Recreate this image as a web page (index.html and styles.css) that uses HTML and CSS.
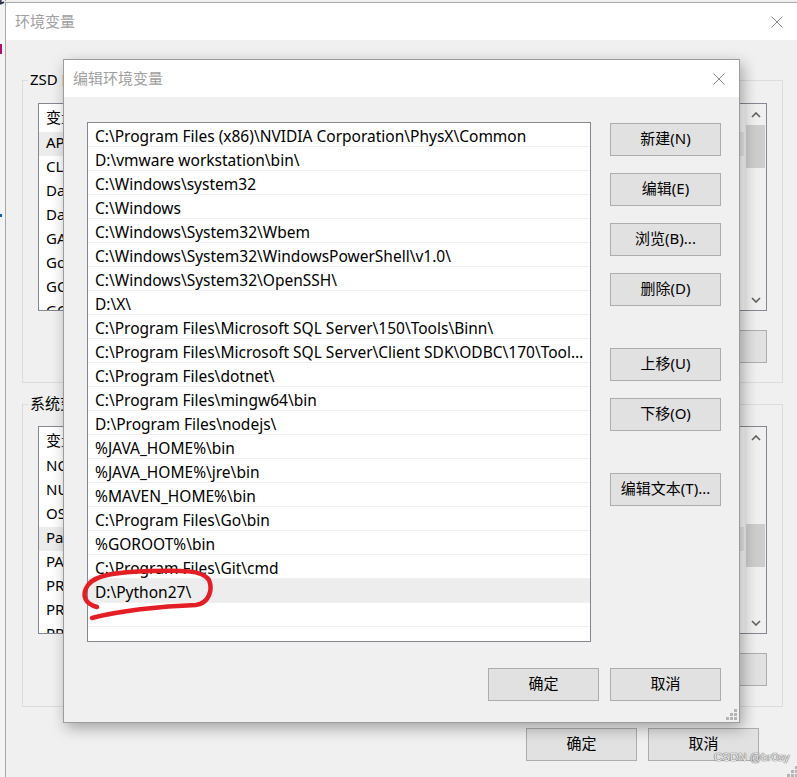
FILE: index.html
```html
<!DOCTYPE html>
<html lang="zh-CN">
<head>
    <meta charset="UTF-8">
    <title>编辑环境变量</title>
    <link rel="stylesheet" href="styles.css">
</head>
<body>
<div class="screen">
    <div class="behind">
        <span class="behind-title">环境变量</span>
        <span class="mark mark-pink"></span>
        <span class="mark mark-blue"></span>
    </div>

    <!-- back window: 环境变量 -->
    <div class="win back">
        <div class="titlebar">
            <span class="title">环境变量</span>
            <span class="close">
                <svg width="12" height="12" viewBox="0 0 12 12"><path d="M0.5 0.5L11.5 11.5M11.5 0.5L0.5 11.5" stroke="#8a8a8a" stroke-width="1"/></svg>
            </span>
        </div>
        <div class="back-body">
            <fieldset class="group">
                <legend>ZSD 的用户变量(U)</legend>
                <div class="varlist">
                    <div class="vl-rows">
                        <div class="vl-head">变量</div>
                        <div class="vl-row sel">APPDATA</div>
                        <div class="vl-row">CLASSPATH</div>
                        <div class="vl-row">DataGrip</div>
                        <div class="vl-row">DataSpell</div>
                        <div class="vl-row">GATEWAY</div>
                        <div class="vl-row">GoLand</div>
                        <div class="vl-row">GOPATH</div>
                        <div class="vl-row">GOPROXY</div>
                    </div>
                    <div class="vscroll">
                        <span class="arrow"><svg width="10" height="6" viewBox="0 0 10 6"><path d="M1 5L5 1L9 5" fill="none" stroke="#606060" stroke-width="1.6"/></svg></span>
                        <div class="track"><div class="thumb" style="margin-top: 0px"></div></div>
                        <span class="arrow"><svg width="10" height="6" viewBox="0 0 10 6"><path d="M1 1L5 5L9 1" fill="none" stroke="#606060" stroke-width="1.6"/></svg></span>
                    </div>
                </div>
                <div class="group-btns">
                    <button class="btn">新建(N)...</button>
                    <button class="btn">编辑(E)...</button>
                    <button class="btn">删除(D)</button>
                </div>
            </fieldset>

            <fieldset class="group group-sys">
                <legend>系统变量(S)</legend>
                <div class="varlist">
                    <div class="vl-rows">
                        <div class="vl-head">变量</div>
                        <div class="vl-row">NODE_PATH</div>
                        <div class="vl-row">NUMBER_OF_PROCESSORS</div>
                        <div class="vl-row">OS</div>
                        <div class="vl-row sel">Path</div>
                        <div class="vl-row">PATHEXT</div>
                        <div class="vl-row">PROCESSOR_ARCHITECTURE</div>
                        <div class="vl-row">PROCESSOR_IDENTIFIER</div>
                        <div class="vl-row">PROCESSOR_LEVEL</div>
                    </div>
                    <div class="vscroll">
                        <span class="arrow"><svg width="10" height="6" viewBox="0 0 10 6"><path d="M1 5L5 1L9 5" fill="none" stroke="#606060" stroke-width="1.6"/></svg></span>
                        <div class="track"><div class="thumb" style="margin-top: 76px"></div></div>
                        <span class="arrow"><svg width="10" height="6" viewBox="0 0 10 6"><path d="M1 1L5 5L9 1" fill="none" stroke="#606060" stroke-width="1.6"/></svg></span>
                    </div>
                </div>
                <div class="group-btns">
                    <button class="btn">新建(W)...</button>
                    <button class="btn">编辑(I)...</button>
                    <button class="btn">删除(L)</button>
                </div>
            </fieldset>

            <div class="back-foot">
                <button class="btn">确定</button>
                <button class="btn">取消</button>
            </div>
        </div>
        <span class="grip grip-back"></span>
    </div>

    <!-- front window: 编辑环境变量 -->
    <div class="win front">
        <div class="titlebar">
            <span class="title">编辑环境变量</span>
            <span class="close close-front">
                <svg width="12" height="12" viewBox="0 0 12 12"><path d="M0.5 0.5L11.5 11.5M11.5 0.5L0.5 11.5" stroke="#8a8a8a" stroke-width="1"/></svg>
            </span>
        </div>
        <div class="front-body">
            <div class="front-main">
                <div class="pathlist">
                    <div class="path">C:\Program Files (x86)\NVIDIA Corporation\PhysX\Common</div>
                    <div class="path">D:\vmware workstation\bin\</div>
                    <div class="path">C:\Windows\system32</div>
                    <div class="path">C:\Windows</div>
                    <div class="path">C:\Windows\System32\Wbem</div>
                    <div class="path">C:\Windows\System32\WindowsPowerShell\v1.0\</div>
                    <div class="path">C:\Windows\System32\OpenSSH\</div>
                    <div class="path">D:\X\</div>
                    <div class="path">C:\Program Files\Microsoft SQL Server\150\Tools\Binn\</div>
                    <div class="path">C:\Program Files\Microsoft SQL Server\Client SDK\ODBC\170\Tools\Binn\</div>
                    <div class="path">C:\Program Files\dotnet\</div>
                    <div class="path">C:\Program Files\mingw64\bin</div>
                    <div class="path">D:\Program Files\nodejs\</div>
                    <div class="path">%JAVA_HOME%\bin</div>
                    <div class="path">%JAVA_HOME%\jre\bin</div>
                    <div class="path">%MAVEN_HOME%\bin</div>
                    <div class="path">C:\Program Files\Go\bin</div>
                    <div class="path">%GOROOT%\bin</div>
                    <div class="path">C:\Program Files\Git\cmd</div>
                    <div class="path sel">D:\Python27\</div>
                    <div class="path"></div>
                </div>
                <div class="btn-col">
                    <button class="btn">新建(N)</button>
                    <button class="btn">编辑(E)</button>
                    <button class="btn">浏览(B)...</button>
                    <button class="btn">删除(D)</button>
                    <button class="btn gap-lg">上移(U)</button>
                    <button class="btn">下移(O)</button>
                    <button class="btn gap-lg">编辑文本(T)...</button>
                </div>
            </div>
            <div class="front-foot">
                <button class="btn">确定</button>
                <button class="btn">取消</button>
            </div>
        </div>
        <span class="grip grip-front"></span>
    </div>

    <!-- hand drawn red mark -->
    <svg class="scribble" width="140" height="62" viewBox="78 565 140 62">
        <path d="M92 618 C 118 611, 160 606, 196 605 C 209 603, 213 590, 209 580 C 203 570, 180 570, 150 571 C 120 572, 96 574, 88 585 C 81 595, 85 604, 97 607" fill="none" stroke="#e31e24" stroke-width="4.5" stroke-linecap="round"/>
    </svg>

    <div class="watermark">CSDN @br0sy</div>
</div>
</body>
</html>
```

FILE: styles.css
```css
body {
    margin: 0;
    font-family: "Noto Sans", "Noto Sans CJK SC", sans-serif;
    font-size: 15px;
    color: #000;
}
.screen {
    position: relative;
    width: 797px;
    height: 777px;
    overflow: hidden;
    background: #f0f0f0;
}

/* stuff behind the windows */
.behind {
    position: absolute;
    left: 0;
    top: 0;
    width: 6px;
    height: 777px;
    background: #f4f4f4;
    overflow: hidden;
}
.behind-title {
    position: absolute;
    left: -4px;
    top: -22px;
    font-family: "Noto Sans CJK SC", sans-serif;
    font-size: 24px;
    color: #333;
    white-space: nowrap;
}
.mark {
    position: absolute;
    left: 0;
    width: 2px;
}
.mark-pink {
    top: 44px;
    height: 10px;
    background: #b0106e;
}
.mark-blue {
    top: 214px;
    height: 3px;
    background: #0a64c8;
}

/* windows */
.win {
    position: absolute;
    box-sizing: border-box;
    background: #f0f0f0;
}
.back {
    left: 5px;
    top: 2px;
    width: 795px;
    height: 790px;
    border: 1px solid #a8a8a8;
}
.front {
    left: 63px;
    top: 59px;
    width: 677px;
    height: 664px;
    border: 1px solid #9c9c9c;
    box-shadow: 3px 5px 14px rgba(0, 0, 0, 0.32);
}
.titlebar {
    height: 37px;
    background: #fff;
    display: flex;
    align-items: center;
    padding-left: 9px;
}
.title {
    font-family: "Noto Sans CJK SC", sans-serif;
    font-size: 15px;
    color: #a0a0a0;
    margin-top: -2px;
}
.close {
    margin-left: auto;
    width: 44px;
    display: flex;
    justify-content: center;
}
.close-front {
    width: 40px;
}

.btn {
    box-sizing: border-box;
    width: 111px;
    height: 33px;
    padding: 0 0 3px 0;
    line-height: 20px;
    background: #e1e1e1;
    border: 1px solid #adadad;
    font-family: "Noto Sans", "Noto Sans CJK SC", sans-serif;
    font-size: 15px;
    color: #000;
}

/* back window body */
.back-body {
    padding: 30px 16px 0 16px;
}
.group {
    margin: 0;
    padding: 13px 15px 19px 15px;
    border: 1px solid #dcdcdc;
}
.group legend {
    margin-left: -10px;
    padding: 0 2px 2px 2px;
    line-height: 18px;
}
.group-sys {
    margin-top: 11px;
    padding-top: 12px;
    padding-bottom: 20px;
}
.varlist {
    box-sizing: border-box;
    height: 208px;
    border: 1px solid #828790;
    background: #fff;
    display: flex;
}
.vl-rows {
    flex: 1;
    overflow: hidden;
}
.vl-head {
    height: 28px;
    line-height: 26px;
    padding-left: 7px;
    font-family: "Noto Sans CJK SC", sans-serif;
}
.vl-row {
    box-sizing: border-box;
    height: 24px;
    line-height: 20px;
    padding: 0 0 4px 7px;
    white-space: nowrap;
}
.vl-row.sel {
    background: #ececec;
}
.vscroll {
    width: 21px;
    background: #f0f0f0;
    border-left: 1px solid #f7f7f7;
    display: flex;
    flex-direction: column;
}
.arrow {
    height: 21px;
    display: flex;
    align-items: center;
    justify-content: center;
}
.track {
    flex: 1;
    padding: 0 1px;
}
.thumb {
    height: 43px;
    background: #cdcdcd;
}
.group-btns {
    margin-top: 19px;
    display: flex;
    justify-content: flex-end;
    gap: 11px;
}
.back-foot {
    margin-top: 21px;
    padding-right: 24px;
    display: flex;
    justify-content: flex-end;
    gap: 11px;
}

/* front window body */
.front-body {
    padding: 25px 18px 0 23px;
}
.front-main {
    display: flex;
    gap: 19px;
}
.pathlist {
    box-sizing: border-box;
    width: 504px;
    height: 520px;
    border: 1px solid #828790;
    background: #fff;
}
.path {
    box-sizing: border-box;
    height: 24px;
    line-height: 19px;
    padding: 4px 5px 0 7px;
    border-bottom: 1px solid #f0f0f0;
    font-size: 15.5px;
    white-space: nowrap;
    overflow: hidden;
    text-overflow: ellipsis;
}
.path.sel {
    background: #ededed;
}
.btn-col {
    padding-top: 1px;
    display: flex;
    flex-direction: column;
    gap: 17px;
}
.btn-col .gap-lg {
    margin-top: 25px;
}
.front-foot {
    margin-top: 26px;
    display: flex;
    justify-content: flex-end;
    gap: 11px;
}

/* resize grips */
.grip {
    position: absolute;
    width: 11px;
    height: 11px;
    background:
        linear-gradient(#b4b4b4, #b4b4b4) 8px 0 / 3px 3px no-repeat,
        linear-gradient(#b4b4b4, #b4b4b4) 4px 4px / 3px 3px no-repeat,
        linear-gradient(#b4b4b4, #b4b4b4) 8px 4px / 3px 3px no-repeat,
        linear-gradient(#b4b4b4, #b4b4b4) 0 8px / 3px 3px no-repeat,
        linear-gradient(#b4b4b4, #b4b4b4) 4px 8px / 3px 3px no-repeat,
        linear-gradient(#b4b4b4, #b4b4b4) 8px 8px / 3px 3px no-repeat;
}
.grip-front {
    right: 2px;
    bottom: 2px;
}
.grip-back {
    left: 781px;
    top: 763px;
}

.scribble {
    position: absolute;
    left: 78px;
    top: 565px;
}
.watermark {
    position: absolute;
    left: 714px;
    top: 751px;
    font-family: "Liberation Sans", sans-serif;
    font-size: 11.5px;
    color: #f2f2f2;
    text-shadow: 0 0 1px #707070, 0 0 1px #707070, 0 0 1px #707070;
}
```
